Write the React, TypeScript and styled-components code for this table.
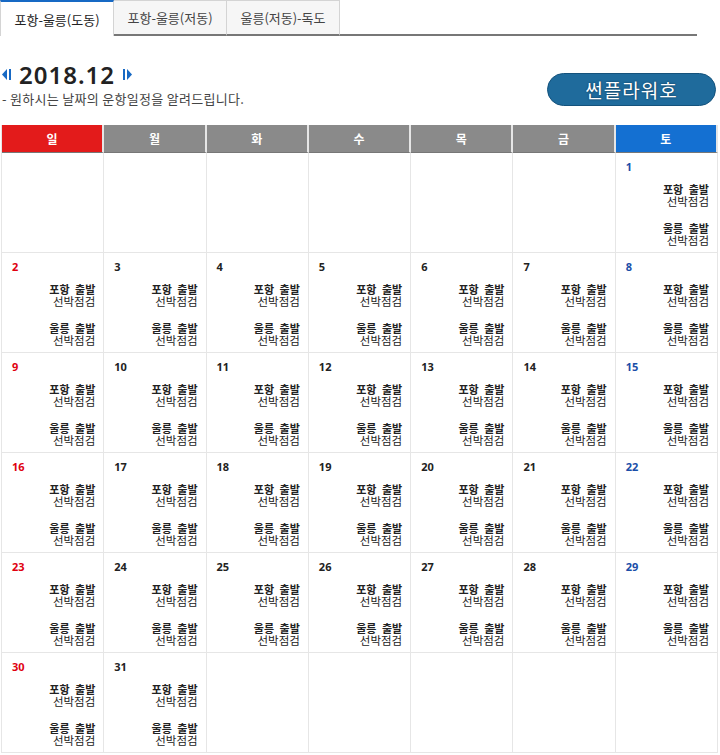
import styled, { createGlobalStyle } from 'styled-components';

const GlobalStyle = createGlobalStyle`
  body {
    margin: 0;
    background: #fff;
    font-family: "Noto Sans CJK KR", "Noto Sans", sans-serif;
    color: #222;
  }
`;

const TABS = ['포항-울릉(도동)', '포항-울릉(저동)', '울릉(저동)-독도'];
const WEEK = ['일', '월', '화', '수', '목', '금', '토'];

// December 2018 starts on Saturday
const cells: (number | null)[] = [];
for (let i = 0; i < 6; i++) cells.push(null);
for (let d = 1; d <= 31; d++) cells.push(d);
while (cells.length % 7) cells.push(null);

const trips = ['포항 출발', '울릉 출발'];

function Arrow({ dir }: { dir: 'left' | 'right' }) {
  return (
    <svg width="9" height="13" viewBox="0 0 9 13">
      {dir === 'left' ? (
        <>
          <polygon points="5,1 5,12 0,6.5" fill="#1769c4" />
          <rect x="7" y="1" width="2" height="11" fill="#1769c4" />
        </>
      ) : (
        <>
          <rect x="0" y="1" width="2" height="11" fill="#1769c4" />
          <polygon points="4,1 4,12 9,6.5" fill="#1769c4" />
        </>
      )}
    </svg>
  );
}

export default function App() {
  return (
    <Page>
      <GlobalStyle />
      <TabBar>
        {TABS.map((t, i) => (
          <Tab key={t} $active={i === 0}>
            {t}
          </Tab>
        ))}
        <TabRest />
      </TabBar>

      <Head>
        <div>
          <MonthNav>
            <Arrow dir="left" />
            <Month>2018.12</Month>
            <Arrow dir="right" />
          </MonthNav>
          <Desc>- 원하시는 날짜의 운항일정을 알려드립니다.</Desc>
        </div>
        <ShipButton>썬플라워호</ShipButton>
      </Head>

      <Calendar>
        {WEEK.map((w, i) => (
          <DayHead key={w} $kind={i === 0 ? 'sun' : i === 6 ? 'sat' : 'day'}>
            {w}
          </DayHead>
        ))}
        {cells.map((d, i) => (
          <Cell key={i}>
            {d && (
              <>
                <DateNum $kind={i % 7 === 0 ? 'sun' : i % 7 === 6 ? 'sat' : 'day'}>{d}</DateNum>
                {trips.map((t) => (
                  <Trip key={t}>
                    <strong>{t}</strong>
                    <span>선박점검</span>
                  </Trip>
                ))}
              </>
            )}
          </Cell>
        ))}
      </Calendar>
    </Page>
  );
}

const Page = styled.div`
  width: 720px;
`;

const TabBar = styled.div`
  display: flex;
  width: 697px;
  height: 36px;
`;

const Tab = styled.div<{ $active: boolean }>`
  width: 113px;
  flex: none;
  display: flex;
  align-items: center;
  justify-content: center;
  font-size: 13px;
  box-sizing: border-box;
  border: 1px solid #d4d4d4;
  border-left: none;
  color: ${(p) => (p.$active ? '#222' : '#444')};
  background: ${(p) => (p.$active ? '#fff' : '#f6f6f6')};
  border-top: ${(p) => (p.$active ? '2px solid #1769c4' : '1px solid #d4d4d4')};
  border-bottom: ${(p) => (p.$active ? 'none' : '2px solid #777')};
  &:first-child {
    width: 114px;
    border-left: 1px solid #d4d4d4;
  }
`;

const TabRest = styled.div`
  flex: 1;
  border-bottom: 2px solid #777;
`;

const Head = styled.div`
  display: flex;
  justify-content: space-between;
  align-items: flex-end;
  margin-top: 24px;
  padding: 0 4px 0 2px;
  height: 47px;
`;

const MonthNav = styled.div`
  display: flex;
  align-items: center;
  gap: 8px;
  height: 28px;
`;

const Month = styled.span`
  font-size: 24px;
  font-weight: 600;
  letter-spacing: 1px;
  color: #222;
  font-family: "Noto Sans", "Noto Sans CJK KR", sans-serif;
`;

const Desc = styled.div`
  font-size: 13px;
  letter-spacing: 0.3px;
  color: #444;
  margin-top: 2px;
  line-height: 17px;
`;

const ShipButton = styled.div`
  width: 169px;
  height: 33px;
  box-sizing: border-box;
  border: 1px solid #14527c;
  border-radius: 17px;
  background: #1f6b9c;
  color: #fff;
  font-size: 19px;
  letter-spacing: 1px;
  display: flex;
  align-items: center;
  justify-content: center;
  text-shadow: 0 0 2px #0b2f4a;
  align-self: flex-start;
  margin-top: 13px;
`;

const Calendar = styled.div`
  display: grid;
  grid-template-columns: repeat(7, 1fr);
  width: 716px;
  margin: 18px 0 0 1px;
  border-left: 1px solid #e6e6e6;
`;

const kindBg = { sun: '#e31b1b', sat: '#1470d2', day: '#8a8a8a' };
const kindColor = { sun: '#e0000f', sat: '#1a4ea8', day: '#222' };

const DayHead = styled.div<{ $kind: 'sun' | 'sat' | 'day' }>`
  height: 28px;
  display: flex;
  align-items: center;
  justify-content: center;
  background: ${(p) => kindBg[p.$kind]};
  color: #fff;
  font-size: 12px;
  font-weight: 700;
  border-right: 2px solid #e6e6e6;
  border-bottom: 1px solid #777;
  box-sizing: border-box;
`;

const Cell = styled.div`
  height: 100px;
  box-sizing: border-box;
  border-right: 1px solid #e6e6e6;
  border-bottom: 1px solid #e6e6e6;
  padding: 7px 8px 0 10px;
  display: flex;
  flex-direction: column;
`;

const DateNum = styled.div<{ $kind: 'sun' | 'sat' | 'day' }>`
  font-size: 11px;
  font-weight: 700;
  color: ${(p) => kindColor[p.$kind]};
  line-height: 14px;
  margin-bottom: 9px;
  font-family: "Noto Sans", sans-serif;
`;

const Trip = styled.div`
  display: flex;
  flex-direction: column;
  align-items: flex-end;
  font-size: 11px;
  line-height: 12px;
  color: #222;
  margin-bottom: 15px;
  strong {
    font-weight: 700;
    word-spacing: 3px;
  }
  span {
    font-weight: 400;
    font-size: 11.5px;
  }
`;
